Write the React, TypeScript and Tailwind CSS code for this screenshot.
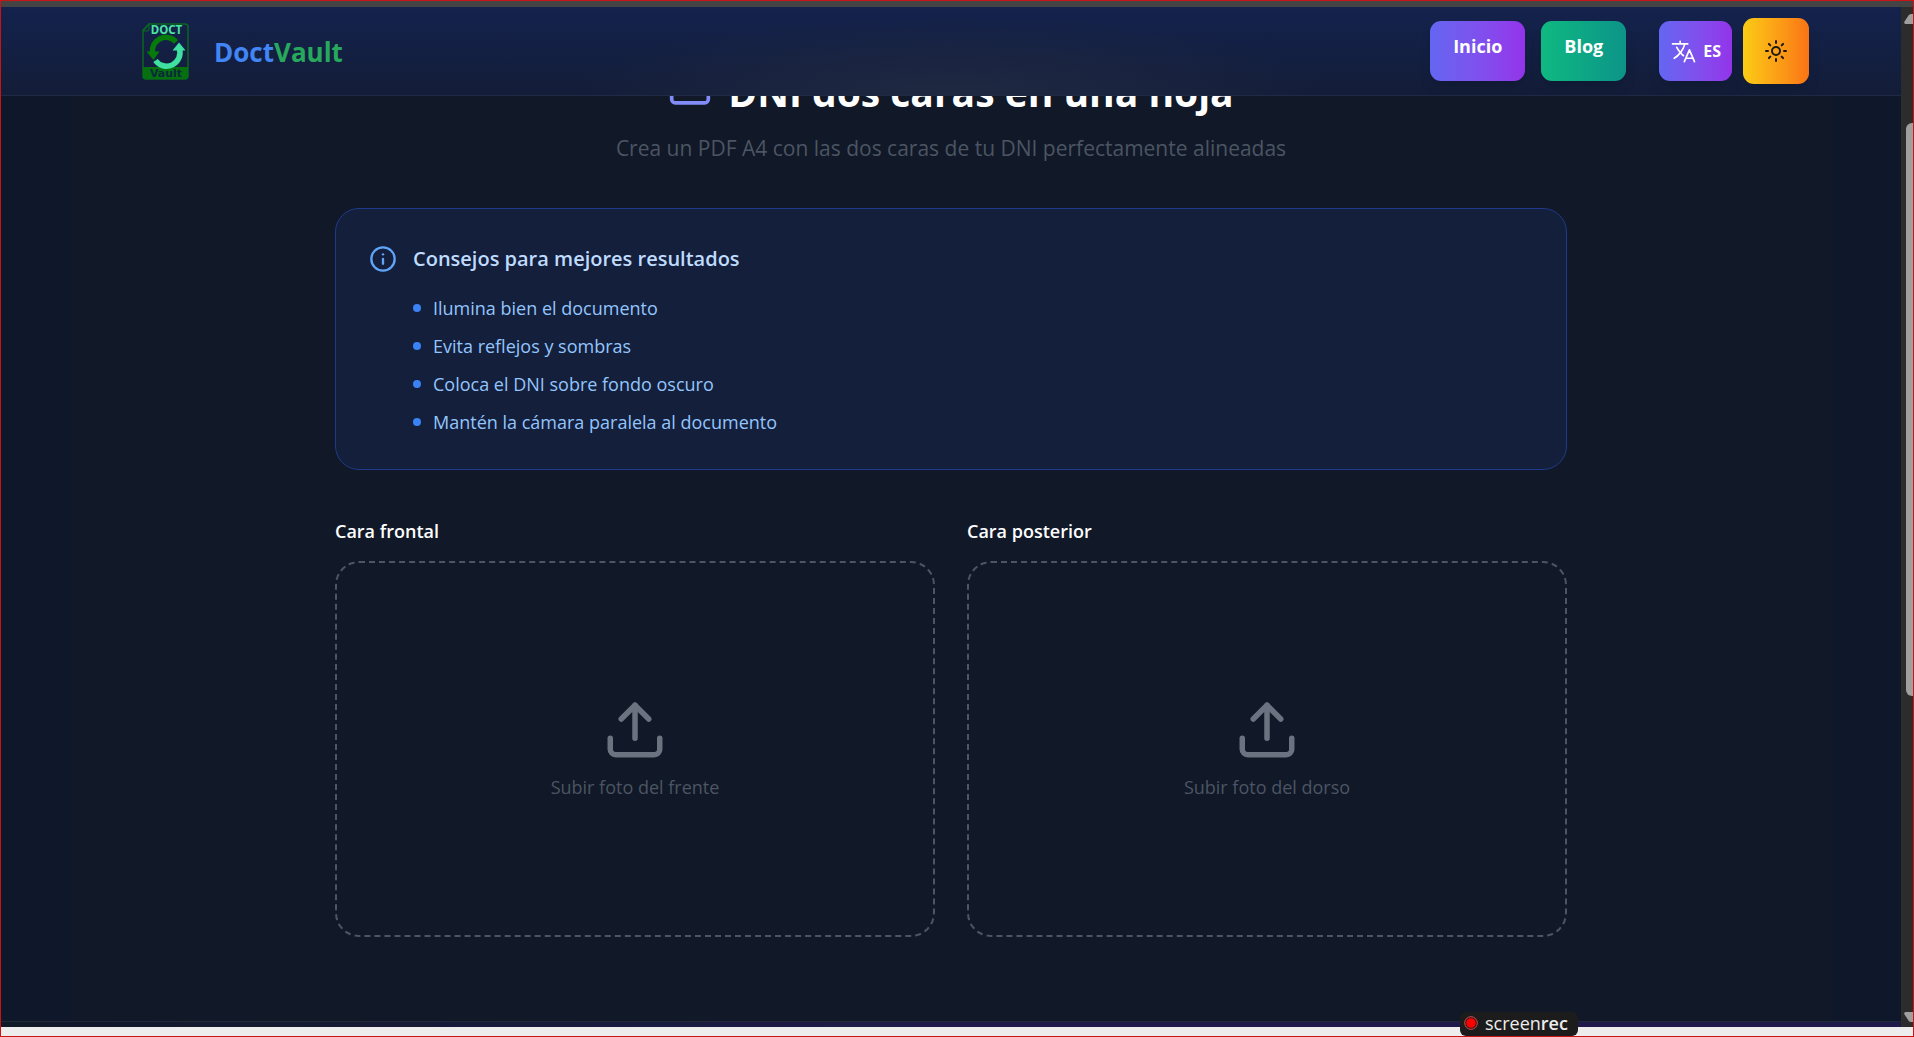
import { useState } from "react";
import { CreditCard, Info, Sun, Upload } from "lucide-react";
import { IoLanguageOutline } from "react-icons/io5";

const tips = [
  "Ilumina bien el documento",
  "Evita reflejos y sombras",
  "Coloca el DNI sobre fondo oscuro",
  "Mantén la cámara paralela al documento",
];

const sides = [
  { id: "front", title: "Cara frontal", hint: "Subir foto del frente" },
  { id: "back", title: "Cara posterior", hint: "Subir foto del dorso" },
];

function Logo() {
  return (
    <svg viewBox="0 0 47 57" className="h-[57px] w-[47px] shrink-0" role="img" aria-label="Doct Vault">
      <path d="M7 1H43a3 3 0 0 1 3 3V53a3 3 0 0 1-3 3H4a3 3 0 0 1-3-3V7Z" fill="none" stroke="#0b651f" strokeWidth="1.500" />
      <path d="M1 8 7 1V5.500a2.500 2.500 0 0 1-2.500 2.500Z" fill="none" stroke="#0b651f" strokeWidth="1.200" />
      <path d="M1 44H46V53a3 3 0 0 1-3 3H4a3 3 0 0 1-3-3Z" fill="#067010" />
      <text x="24.500" y="11" textAnchor="middle" fontSize="11.500" fontWeight="700" fill="#4be3a4" fontFamily="Noto Sans, sans-serif">DOCT</text>
      <path d="M10.500 30A13.500 13.500 0 0 1 34 19" fill="none" stroke="#077a0c" strokeWidth="5.500" />
      <path d="M4.500 28.500H17.500L11.500 37Z" fill="#077a0c" />
      <path d="M37.500 26A13.500 13.500 0 0 1 13.500 37.500" fill="none" stroke="#3fe0a0" strokeWidth="5.500" />
      <path d="M30.500 27.500H43.500L37 19.500Z" fill="#3fe0a0" />
      <text x="24" y="54" textAnchor="middle" fontSize="11" fontWeight="700" fill="#0b2a3a" fontFamily="DejaVu Sans, sans-serif">Vault</text>
    </svg>
  );
}

function Header() {
  return (
    <header className="flex h-[89px] shrink-0 items-center justify-between border-b border-[#1f2b45] bg-[radial-gradient(ellipse_20%_90%_at_50%_100%,rgba(31,41,66,1),rgba(31,41,66,0)),linear-gradient(to_bottom,#14224d,#131d38)] pr-[92px] pl-[141px]">
      <a href="#" className="flex items-center gap-[25px]">
        <Logo />
        <span className="pt-0.5 text-[26px] leading-8 font-bold text-[#4285f4]">
          Doct<span className="text-[#27a85c]">Vault</span>
        </span>
      </a>
      <div className="flex items-center gap-[33px]">
        <nav className="flex gap-4 text-lg font-bold text-white">
          <a href="#" className="flex h-15 items-center rounded-[11px] bg-linear-to-r from-[#6366f1] to-[#9333ea] px-[23px] pb-2.5 shadow-lg">
            Inicio
          </a>
          <a href="#" className="flex h-15 items-center rounded-[11px] bg-linear-to-r from-[#10b981] to-[#0d9488] px-[23px] pb-2.5 shadow-lg">
            Blog
          </a>
        </nav>
        <div className="flex items-center gap-[11px]">
          <button type="button" className="flex h-15 items-center gap-1.5 rounded-[11px] bg-linear-to-r from-[#6366f1] to-[#9333ea] px-[11px] font-bold text-white shadow-lg">
            <IoLanguageOutline className="size-[27px]" />
            ES
          </button>
          <button type="button" aria-label="Cambiar tema" className="flex size-[66px] items-center justify-center rounded-[11px] bg-linear-to-r from-[#facc15] to-[#f97316] text-[#1f1a10] shadow-lg">
            <Sun className="size-6" strokeWidth={2} />
          </button>
        </div>
      </div>
    </header>
  );
}

function Tips() {
  return (
    <section className="flex gap-4 rounded-3xl border border-[#1f3a8a] bg-[#141f3b] p-8 pl-[33px]">
      <Info className="mt-1 size-7 shrink-0 text-[#60a5fa]" strokeWidth={2} />
      <div>
        <h2 className="mb-4 text-xl leading-9 font-semibold text-[#bfdbfe]">Consejos para mejores resultados</h2>
        <ul className="flex flex-col gap-2 text-lg leading-[30px] text-[#93c5fd]">
          {tips.map((tip) => (
            <li key={tip} className="flex items-center gap-3">
              <span className="size-2 rounded-full bg-[#3b82f6]" />
              {tip}
            </li>
          ))}
        </ul>
      </div>
    </section>
  );
}

function UploadCard({ id, title, hint }: { id: string; title: string; hint: string }) {
  const [fileName, setFileName] = useState("");
  return (
    <div className="flex flex-col gap-4">
      <h3 className="text-lg leading-7 font-semibold text-white">{title}</h3>
      <label
        htmlFor={id}
        className="flex h-94 cursor-pointer flex-col items-center justify-center gap-2.5 rounded-3xl border-2 border-dashed border-[#4b5563] text-lg leading-7 text-[#4b5563]"
      >
        <Upload className="size-[66px] text-[#6b7280]" strokeWidth={2} />
        {fileName || hint}
        <input
          id={id}
          type="file"
          accept="image/*"
          className="sr-only"
          onChange={(e) => setFileName(e.target.files?.[0]?.name ?? "")}
        />
      </label>
    </div>
  );
}

function Scrollbar() {
  return (
    <div aria-hidden="true" className="flex w-3 shrink-0 flex-col items-end overflow-hidden bg-[#2c2c2c] pt-[7px] pb-[5px]">
      <svg viewBox="0 0 9 10" className="h-2.5 w-[9px]">
        <path d="M9 0H7Q5.500 0 4.500 1.500L.5 7.500Q-.5 10 2 10H9Z" fill="#9f9f9f" />
      </svg>
      <div className="mt-[99px] mb-auto h-[573px] w-[7px] rounded-l-md bg-[#9f9f9f]" />
      <svg viewBox="0 0 9 10" className="h-2.5 w-[9px]">
        <path d="M9 10H7Q5.500 10 4.500 8.500L.5 2.500Q-.5 0 2 0H9Z" fill="#9f9f9f" />
      </svg>
    </div>
  );
}

export default function App() {
  return (
    <div className="relative flex h-screen flex-col overflow-hidden border border-[#c81414] bg-[#ededed] font-['Open_Sans',sans-serif]">
      <div className="h-1.5 shrink-0 bg-[#444444]" />
      <div className="flex min-h-0 flex-1">
        <div className="flex min-w-0 flex-1 flex-col bg-[#0f182a]">
          <Header />
          <main className="mx-[70px] min-h-0 flex-1 overflow-hidden bg-[#111827]">
            <div className="mx-auto -mt-7 max-w-[1232px]">
              <div className="mb-4 flex justify-center gap-4">
                <CreditCard className="size-11 text-[#818cf8]" strokeWidth={2} />
                <h1 className="text-[39px] leading-12 font-bold text-white">DNI dos caras en una hoja</h1>
              </div>
              <p className="mb-11 text-center text-[21px] leading-8 text-[#4b5563]">
                Crea un PDF A4 con las dos caras de tu DNI perfectamente alineadas
              </p>
              <Tips />
              <div className="mt-[47px] grid grid-cols-2 gap-8">
                {sides.map((side) => (
                  <UploadCard key={side.id} {...side} />
                ))}
              </div>
            </div>
          </main>
          <footer className="h-1.5 shrink-0 border-t border-[#1f2937] bg-linear-to-r from-[#111827] via-[#1e1b4b] to-[#1e1b4b]" />
        </div>
        <Scrollbar />
      </div>
      <div className="h-[9px] shrink-0" />
      <div className="absolute right-[335px] bottom-0 flex h-6 w-[118px] items-center gap-[7px] rounded-md bg-[#1c1c1c] pb-0.5 pl-1 text-lg leading-5 text-[#ededed]">
        <svg viewBox="0 0 14 14" className="size-3.5">
          <circle cx="7" cy="7" r="6.300" fill="none" stroke="#e04a4a" strokeWidth="1" />
          <circle cx="7" cy="7" r="4.800" fill="#ff0000" />
        </svg>
        <span>
          screen<span className="font-semibold">rec</span>
        </span>
      </div>
    </div>
  );
}
